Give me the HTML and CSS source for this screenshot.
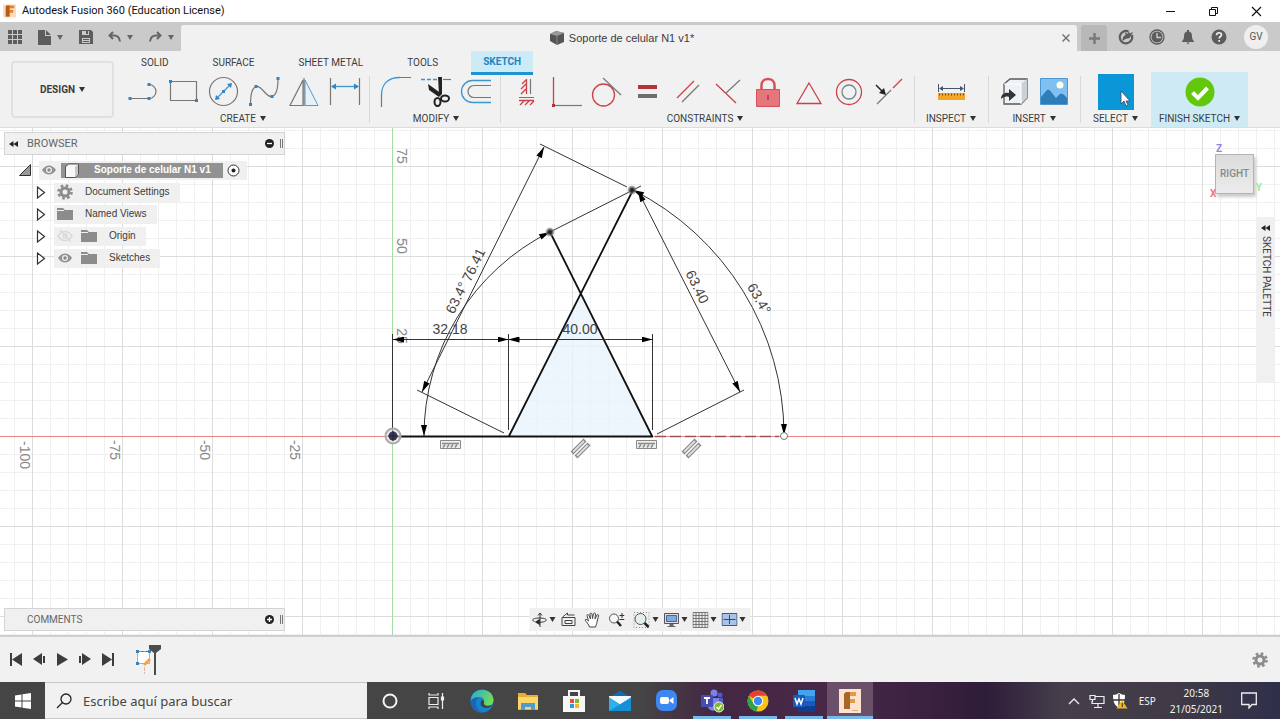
FILE: index.html
```html
<!DOCTYPE html>
<html lang="es">
<head>
<meta charset="utf-8">
<title>Autodesk Fusion 360 (Education License)</title>
<link rel="stylesheet" href="styles.css">
</head>
<body>
<header class="titlebar">
  <svg class="app-logo" viewBox="0 0 14 14" aria-hidden="true"><rect width="14" height="14" fill="#fbdcc0"/><path d="M4 1h8v3H7v2h4v3H7v4H3V2z" fill="#e8802a"/><path d="M4 1h3v12H3V2z" fill="#b85c14"/></svg>
  <span class="app-title">Autodesk Fusion 360 (Education License)</span>
  <div class="win-controls">
    <button class="win-btn" aria-label="Minimize"><svg width="11" height="11" viewBox="0 0 11 11"><path d="M1 5.500h9" stroke="#111"/></svg></button>
    <button class="win-btn" aria-label="Restore"><svg width="11" height="11" viewBox="0 0 11 11" fill="none" stroke="#111"><path d="M1.500 3.500h6v6h-6zM3.500 3V1.500h6v6H8"/></svg></button>
    <button class="win-btn" aria-label="Close"><svg width="11" height="11" viewBox="0 0 11 11"><path d="M1 1l9 9M10 1l-9 9" stroke="#111" stroke-width="1.200"/></svg></button>
  </div>
</header>

<div class="appbar">
  <div class="quick">
    <button class="qbtn" aria-label="Data panel"><svg width="14" height="14" viewBox="0 0 14 14" fill="#5c5c5c"><path d="M0 0h4v4H0zM5 0h4v4H5zM10 0h4v4h-4zM0 5h4v4H0zM5 5h4v4H5zM10 5h4v4h-4zM0 10h4v4H0zM5 10h4v4H5zM10 10h4v4h-4z"/></svg></button>
    <button class="qbtn" aria-label="File"><svg width="13" height="15" viewBox="0 0 13 15" fill="#5c5c5c"><path d="M0 0h7v6h6v9H0zM8 0l5 5H8z"/></svg><i class="caret gray"></i></button>
    <button class="qbtn" aria-label="Save"><svg width="14" height="14" viewBox="0 0 14 14"><path d="M0 0h12l2 2v12H0z" fill="#5c5c5c"/><path d="M3 1h7v4H3zM3 8h8v5H3z" fill="#cacaca"/><path d="M7 1h2v3H7zM4 9h6v1H4zM4 11h6v1H4z" fill="#5c5c5c"/></svg></button>
    <button class="qbtn" aria-label="Undo"><svg width="13" height="12" viewBox="0 0 13 12"><path d="M5 1L1.500 4.500 5 8M2 4.500h4c3.500 0 5.500 2 6 6" fill="none" stroke="#666" stroke-width="2"/></svg><i class="caret gray"></i></button>
    <button class="qbtn" aria-label="Redo"><svg width="13" height="12" viewBox="0 0 13 12"><path d="M8 1l3.500 3.500L8 8M11 4.500H7c-3.500 0-5.500 2-6 6" fill="none" stroke="#666" stroke-width="2"/></svg><i class="caret gray"></i></button>
  </div>
  <div class="doc-tab">
    <span class="doc-name"><svg width="16" height="16" viewBox="0 0 16 16"><path d="M1 4l6-3 8 2v9l-7 3-7-4z" fill="#555"/><path d="M1 4l6-3 8 2-7 3z" fill="#999"/><path d="M8 6v9" stroke="#888"/></svg>Soporte de celular N1 v1*</span>
    <button class="tab-close" aria-label="Close tab"><svg width="8" height="8" viewBox="0 0 8 8"><path d="M.5.5l7 7M7.500.5l-7 7" stroke="#777" stroke-width="1.500"/></svg></button>
  </div>
  <button class="new-tab" aria-label="New tab"><svg width="13" height="13" viewBox="0 0 13 13"><path d="M6.500 1v11M1 6.500h11" stroke="#7a7a7a" stroke-width="2.500"/></svg></button>
  <div class="status">
    <button class="sbtn" aria-label="Extensions"><svg width="16" height="16" viewBox="0 0 16 16"><path d="M10.500 2.500A6.200 6.200 0 1 0 13.800 6" fill="none" stroke="#5c5c5c" stroke-width="2.200"/><path d="M4.500 12c0-3 .5-5 3-6l-.5-3 2.500 2L11 2l.5 2.500L15 3l-2.500 4.500C12 10 9 9 7.500 10z" fill="#5c5c5c"/></svg></button>
    <button class="sbtn" aria-label="Job status"><svg width="16" height="16" viewBox="0 0 16 16"><circle cx="8" cy="8" r="7" fill="none" stroke="#5c5c5c" stroke-width="1.300"/><circle cx="8" cy="8" r="5.500" fill="#5c5c5c"/><path d="M8 4v4.500h4" fill="none" stroke="#cacaca" stroke-width="1.400"/></svg></button>
    <button class="sbtn" aria-label="Notifications"><svg width="16" height="16" viewBox="0 0 16 16" fill="#5c5c5c"><path d="M7 1h2v1.500c2 .5 3 2 3 4.500 0 2.500.5 4 2 5v1H2v-1c1.500-1 2-2.500 2-5s1-4 3-4.500zM6.500 13.500h3L8 15.500z"/></svg></button>
    <button class="sbtn" aria-label="Help"><svg width="16" height="16" viewBox="0 0 16 16"><circle cx="8" cy="8" r="7.500" fill="#5c5c5c"/><path d="M5.500 6.300c0-3.300 5-3.300 5-.5 0 1.700-2.300 1.700-2.300 3.700M8.200 11v1.800" fill="none" stroke="#eee" stroke-width="1.700"/></svg></button>
    <button class="avatar">GV</button>
  </div>
</div>

<div class="ribbon">
  <div class="workspace"><button class="design">DESIGN<i class="caret"></i></button></div>
  <nav class="tabs">
    <button class="tab">SOLID</button><button class="tab">SURFACE</button><button class="tab">SHEET METAL</button><button class="tab">TOOLS</button><button class="tab active">SKETCH</button>
  </nav>
  <div class="groups">
    <section class="group create">
      <div class="tools">
        <button class="tool" aria-label="Line"><svg viewBox="0 0 40 32"><path d="M7 22.500h19a7 7 0 0 0 0-14" class="ln"/><path d="M5.500 21h3v3h-3zM24.500 21h3v3h-3zM24.500 7h3v3h-3z" class="bp"/></svg></button>
        <button class="tool" aria-label="Rectangle"><svg viewBox="0 0 40 32"><path d="M7.500 5.500h26v19h-26z" class="ln"/><path d="M6 4h3v3H6zM32 23h3v3h-3z" class="bp"/></svg></button>
        <button class="tool" aria-label="Circle"><svg viewBox="0 0 40 32"><circle cx="20.500" cy="15.500" r="14" class="ln"/><path d="M14 22l13-13" class="bl"/><path d="M12 24l1-5 4 4zM29 7l-1 5-4-4zM19 14h3v3h-3z" class="bp"/></svg></button>
        <button class="tool" aria-label="Spline"><svg viewBox="0 0 40 32"><path d="M7.500 28C7.500 18 9 12 13 10.500 19 9 23 22 29 20.500 34 19 35 12 35 3" class="ln"/><path d="M6 27h3v3H6zM11.500 9h3v3h-3zM27.500 19h3v3h-3zM33.500 1h3v3h-3z" class="bp"/></svg></button>
        <button class="tool" aria-label="Mirror"><svg viewBox="0 0 40 32"><path d="M20 4v25.500H7z" class="ln"/><path d="M22 4v25.500h13z" fill="#e6f2fa" stroke="#4c9fd6"/><path d="M21 2v28" class="ln"/></svg></button>
        <button class="tool" aria-label="Sketch dimension"><svg viewBox="0 0 40 32"><path d="M7.500 2v27M36.500 2v27" class="ln"/><path d="M9 10.500h26" class="bl"/><path d="M8 10.500l5-3v6zM36 10.500l-5-3v6z" class="bp"/></svg></button>
      </div>
      <button class="group-label">CREATE<i class="caret"></i></button>
    </section>
    <section class="group modify">
      <div class="tools">
        <button class="tool" aria-label="Fillet"><svg viewBox="0 0 40 32"><path d="M5.500 31V18M23 1.500h12" class="ln"/><path d="M5.500 19C5.500 8 12 1.500 24 1.500" class="bl"/></svg></button>
        <button class="tool" aria-label="Trim"><svg viewBox="0 0 40 32"><path d="M5 3.500h16" class="bl" stroke-dasharray="4 2"/><path d="M27 3.500h8" class="ln"/><path d="M22 1h4v17h-3z" fill="#222"/><path d="M12 8l14 10-3 3-10-7z" fill="#222"/><ellipse cx="21.500" cy="26" rx="3" ry="4" fill="none" stroke="#222" stroke-width="2"/><ellipse cx="29" cy="22.500" rx="4" ry="3" fill="none" stroke="#222" stroke-width="2"/></svg></button>
        <button class="tool" aria-label="Offset"><svg viewBox="0 0 40 32"><path d="M35 4.500H16.500a11 11 0 0 0 0 22H35" class="bl"/><path d="M35 9.500H18a6 6 0 0 0 0 12h17" class="ln"/></svg></button>
      </div>
      <button class="group-label">MODIFY<i class="caret"></i></button>
    </section>
    <section class="group constraints">
      <div class="tools">
        <button class="tool" aria-label="Horizontal/Vertical"><svg viewBox="0 0 40 32"><path d="M21.500 3v15M17 8l4-4M16 13l5-5M16 18l5-5M14 24.500h15M15 29l4-4M20 29l4-4M25 29l4-4" class="rl"/><path d="M25.500 3v15M14 21.500h15" class="ln"/></svg></button>
        <button class="tool" aria-label="Coincident"><svg viewBox="0 0 40 32"><path d="M8.500 1v27" class="rl"/><path d="M9 29.500h28" class="ln"/><path d="M7 28h3v3H7z" fill="#b5323a"/></svg></button>
        <button class="tool" aria-label="Tangent"><svg viewBox="0 0 40 32"><circle cx="18.500" cy="19" r="11" class="rl"/><path d="M18 2l18 17" class="ln"/></svg></button>
        <button class="tool" aria-label="Equal"><svg viewBox="0 0 40 32"><path d="M13 9h19v4H13z" fill="#b5323a"/><path d="M13 18h19v4H13z" fill="#6d6d6d"/></svg></button>
        <button class="tool" aria-label="Parallel"><svg viewBox="0 0 40 32"><path d="M12 22L29 5" class="rl"/><path d="M17 26L34 9" class="ln"/></svg></button>
        <button class="tool" aria-label="Perpendicular"><svg viewBox="0 0 40 32"><path d="M11 8l20 19" class="rl"/><path d="M21 17L35 4" class="ln"/></svg></button>
        <button class="tool" aria-label="Fix"><svg viewBox="0 0 40 32"><path d="M16.500 14V9c0-8 13-8 13 0v5" fill="none" stroke="#d5525a" stroke-width="2.500"/><path d="M11.500 13.500h23v17h-23z" fill="#e5777c" stroke="#d5525a"/><path d="M23 19v5" stroke="#b5323a" stroke-width="1.500"/></svg></button>
        <button class="tool" aria-label="Midpoint"><svg viewBox="0 0 40 32"><path d="M24 7l12 20.500H12z" class="rl"/></svg></button>
        <button class="tool" aria-label="Concentric"><svg viewBox="0 0 40 32"><circle cx="24" cy="16" r="12.500" class="rl"/><circle cx="24" cy="16" r="7" fill="none" stroke="#73878a" stroke-width="1.300"/></svg></button>
        <button class="tool" aria-label="Collinear"><svg viewBox="0 0 40 32"><path d="M12 28l14-14" class="ln"/><path d="M28 12l9-9" class="rl"/><path d="M11 9l6 6" stroke="#222" stroke-width="1.500"/><path d="M21 19l-2-7-5 5z" fill="#222"/></svg></button>
      </div>
      <button class="group-label">CONSTRAINTS<i class="caret"></i></button>
    </section>
    <section class="group inspect">
      <div class="tools">
        <button class="tool" aria-label="Measure"><svg viewBox="0 0 40 32"><path d="M7.500 8v8M33.500 8v8M9 12.500h23" stroke="#44546a" fill="none"/><path d="M8 12.500l4-2.500v5zM33 12.500L29 10v5z" fill="#44546a"/><path d="M7 17h27v7H7z" fill="#f5a623"/><path d="M8 18.500h25" stroke="#75531b" stroke-width="2" stroke-dasharray="1 2"/></svg></button>
      </div>
      <button class="group-label">INSPECT<i class="caret"></i></button>
    </section>
    <section class="group insert">
      <div class="tools">
        <button class="tool" aria-label="Insert derive"><svg viewBox="0 0 40 32"><path d="M10 8l6-5h17v19l-6 6H10z" fill="#eff2f4" stroke="#555a60" stroke-width="1.300"/><path d="M27 8l6-5v19l-6 6z" fill="#ccd1d6"/><path d="M10 8h17v20" fill="none" stroke="#fff"/><path d="M7 23c0-5 4-7 8-6v-4l7 6-7 6v-4c-3-1-6 0-8 2z" fill="#303438"/></svg></button>
        <button class="tool" aria-label="Canvas"><svg viewBox="0 0 40 32"><path d="M6.500 2.500h27v26h-27z" fill="#7fc0f2" stroke="#4b97d0"/><path d="M7 21l6-7c2-1 3 0 5 3l4 5 4-4c2-1 4 0 7 4v6H7z" fill="#2e7cb8"/><circle cx="26" cy="9" r="3.500" fill="#fffde8"/></svg></button>
      </div>
      <button class="group-label">INSERT<i class="caret"></i></button>
    </section>
    <section class="group select">
      <div class="tools">
        <button class="tool" aria-label="Select"><svg class="big" width="36" height="36" viewBox="0 0 36 36"><path d="M0 0h36v36H0z" fill="#0b96d8"/><path d="M23 17v13l3-3 2 5 2-1-2-4h4z" fill="#fff" stroke="#445" stroke-width=".8"/></svg></button>
      </div>
      <button class="group-label">SELECT<i class="caret"></i></button>
    </section>
    <section class="group finish">
      <div class="tools">
        <button class="tool" aria-label="Finish sketch"><svg viewBox="0 0 40 32"><circle cx="20" cy="16" r="14.500" fill="#63c70c"/><path d="M12.500 16.500l5.500 5.500 9.500-10" fill="none" stroke="#fff" stroke-width="4"/></svg></button>
      </div>
      <button class="group-label">FINISH SKETCH<i class="caret"></i></button>
    </section>
  </div>
</div>

<main class="canvas">
  <svg class="sketch" width="100%" height="100%" aria-label="Sketch">
    <defs>
      <pattern id="minor" width="18" height="18" patternUnits="userSpaceOnUse" x="-1" y="0"><path d="M.5 0v18M0 .5h18" stroke="#f0f0f0"/></pattern>
      <pattern id="major" width="90" height="90" patternUnits="userSpaceOnUse" x="-1" y="0"><path d="M.5 0v90M0 .5h90" stroke="#dcdcdc"/></pattern>
      <marker id="arrow" viewBox="0 0 11 6" markerWidth="11" markerHeight="6" refX="11" refY="3" orient="auto-start-reverse" markerUnits="userSpaceOnUse"><path d="M0 0l11 3-11 3z"/></marker>
      <radialGradient id="pt"><stop offset=".3" stop-color="#222"/><stop offset="1" stop-color="#999" stop-opacity=".5"/></radialGradient>
      <g id="glyph-h"><path d="M-9.500-4.500h20v8h-20z" fill="#eee" stroke="#8a8a8a"/><path d="M-8-1.500h17" stroke="#8a8a8a" stroke-width="1.500"/><path d="M-7 2.500l2-3M-3 2.500l2-3M1 2.500l2-3M5 2.500l2-3" stroke="#8a8a8a" stroke-width="1.500"/></g>
      <g id="glyph-p"><path d="M-8 5L5-8M-4 9L9-4" stroke="#858585" stroke-width="4"/><path d="M-7 4L4-7M-3 8L8-3" stroke="#dedede" stroke-width="2"/></g>
    </defs>
    <g transform="translate(393 308)">
      <path d="M-393-308H2600V1400H-393z" fill="url(#minor)"/>
      <path d="M-393-308H2600V1400H-393z" fill="url(#major)"/>
      <path d="M-.5-308V1400" stroke="#a5dba5"/>
      <path d="M-393 .5H2600" stroke="#ee8484"/>
      <g class="ruler">
        <text transform="translate(4 -280) rotate(90)" text-anchor="middle">75</text>
        <text transform="translate(4 -190) rotate(90)" text-anchor="middle">50</text>
        <text transform="translate(4 -100) rotate(90)" text-anchor="middle">25</text>
        <text transform="translate(-103 14) rotate(90)" text-anchor="middle">-25</text>
        <text transform="translate(-193 14) rotate(90)" text-anchor="middle">-50</text>
        <text transform="translate(-283 14) rotate(90)" text-anchor="middle">-75</text>
        <text transform="translate(-373 19) rotate(90)" text-anchor="middle">-100</text>
      </g>
      <path d="M188-144L116 0h143z" fill="#e9f4fc" fill-opacity=".8"/>
      <g fill="none" stroke="#111" stroke-width="1.800">
        <path d="M0 .5h260M116 0l124-246M259 0L157-204"/>
      </g>
      <g fill="none" stroke="#333" stroke-width="1">
        <path d="M-.5-102V0M115.500-102V-6M259.500-102V-6M157-204l91-46M147-292l87 43M24-46l87 43M264-2l87-44"/>
        <path d="M0-96.500h115.500" marker-start="url(#arrow)" marker-end="url(#arrow)"/>
        <path d="M115.500-96.500h144" marker-start="url(#arrow)" marker-end="url(#arrow)"/>
        <path d="M151-289L29-44" marker-start="url(#arrow)" marker-end="url(#arrow)"/>
        <path d="M245-245L347-44" marker-start="url(#arrow)" marker-end="url(#arrow)"/>
        <path d="M31 0A228 228 0 0 1 157-204" marker-start="url(#arrow)" marker-end="url(#arrow)"/>
        <path d="M240-246A275 275 0 0 1 391-1" marker-start="url(#arrow)" marker-end="url(#arrow)"/>
      </g>
      <path d="M262 .5h124" stroke="#93565d" stroke-width="1.500" stroke-dasharray="11 4"/>
      <circle cx="391" cy="0" r="3.500" fill="#fff" stroke="#777"/>
      <circle cx="157" cy="-204" r="4.500" fill="url(#pt)"/>
      <circle cx="239" cy="-246" r="4.500" fill="url(#pt)"/>
      <circle r="7.500" fill="#ddd" fill-opacity=".6" stroke="#aaa" stroke-width="2"/><circle r="4.500" fill="#3b3260"/><path d="M-5 0H5M0-5V5" stroke="#222"/>
      <g class="dims">
        <text x="57" y="-102" text-anchor="middle">32.18</text>
        <text x="187" y="-102" text-anchor="middle">40.00</text>
        <text transform="translate(85 -169) rotate(-63.500)" text-anchor="middle">76.41</text>
        <text transform="translate(68 -136) rotate(-63.500)" text-anchor="middle">63.4°</text>
        <text transform="translate(300 -147) rotate(63.500)" text-anchor="middle">63.40</text>
        <text transform="translate(362 -135) rotate(60)" text-anchor="middle">63.4°</text>
      </g>
      <use href="#glyph-h" x="57" y="9"/><use href="#glyph-h" x="253" y="9"/>
      <use href="#glyph-p" x="187" y="12"/><use href="#glyph-p" x="298" y="12"/>
    </g>
  </svg>

  <aside class="browser">
    <div class="panel-head"><svg width="9" height="6" viewBox="0 0 9 6"><path d="M4.500 0v6L0 3zM9 0v6L4.500 3z" fill="#222"/></svg><span>BROWSER</span><button class="round" aria-label="Minimize browser"><svg width="9" height="9" viewBox="0 0 9 9"><circle cx="4.500" cy="4.500" r="4.500" fill="#222"/><path d="M2 4.500h5" stroke="#fff" stroke-width="1.300"/></svg></button><i class="grip"></i></div>
    <ul class="tree">
      <li class="row root"><svg width="12" height="12" viewBox="0 0 12 12"><path d="M11.500.5v11H.5z" fill="#999" stroke="#333"/></svg>
        <span class="chip"><svg width="14" height="10" viewBox="0 0 14 10"><path d="M0 5c4-6 10-6 14 0-4 6-10 6-14 0z" fill="#929292"/><circle cx="7" cy="5" r="3" fill="#eee"/><circle cx="7" cy="5" r="1.700" fill="#888"/></svg>
        <span class="root-name"><svg width="16" height="15" viewBox="0 0 16 15"><path d="M1.500 4l3-3h10v10l-3 3.500h-10z" fill="#f7f7f7" stroke="#555"/><path d="M11 4l3-3v10l-3 3z" fill="#c8c8c8"/></svg>Soporte de celular N1 v1</span>
        <svg width="13" height="13" viewBox="0 0 13 13"><circle cx="6.500" cy="6.500" r="5.500" fill="#fff" stroke="#333"/><circle cx="6.500" cy="6.500" r="2" fill="#222"/></svg></span></li>
      <li class="row"><svg class="tri" width="10" height="13" viewBox="0 0 10 13"><path d="M1.500 1v11l7-5.500z" fill="#fff" stroke="#333" stroke-width="1.200"/></svg><span class="chip"><svg width="16" height="16" viewBox="0 0 16 16"><circle cx="8" cy="8" r="4" fill="none" stroke="#8c8c8c" stroke-width="3"/><circle cx="8" cy="8" r="6.500" fill="none" stroke="#8c8c8c" stroke-width="2.500" stroke-dasharray="2.600 2.500"/></svg><span class="node">Document Settings</span></span></li>
      <li class="row"><svg class="tri" width="10" height="13" viewBox="0 0 10 13"><path d="M1.500 1v11l7-5.500z" fill="#fff" stroke="#333" stroke-width="1.200"/></svg><span class="chip"><svg width="16" height="12" viewBox="0 0 16 12"><path d="M0 0h6l2 2h8v10H0z" fill="#8c8c8c"/><path d="M0 2.500h7" stroke="#eee"/></svg><span class="node">Named Views</span></span></li>
      <li class="row"><svg class="tri" width="10" height="13" viewBox="0 0 10 13"><path d="M1.500 1v11l7-5.500z" fill="#fff" stroke="#333" stroke-width="1.200"/></svg><span class="chip"><svg width="16" height="12" viewBox="0 0 16 12" fill="none" stroke="#dadada" stroke-width="1.500"><path d="M1 6c4-6 10-6 14 0-4 6-10 6-14 0zM3 0l11 12"/><circle cx="8" cy="6" r="2"/></svg><svg width="16" height="12" viewBox="0 0 16 12"><path d="M0 0h6l2 2h8v10H0z" fill="#8c8c8c"/><path d="M0 2.500h7" stroke="#eee"/></svg><span class="node">Origin</span></span></li>
      <li class="row"><svg class="tri" width="10" height="13" viewBox="0 0 10 13"><path d="M1.500 1v11l7-5.500z" fill="#fff" stroke="#333" stroke-width="1.200"/></svg><span class="chip"><svg width="16" height="12" viewBox="-1 -1 16 12"><path d="M0 5c4-6 10-6 14 0-4 6-10 6-14 0z" fill="#929292"/><circle cx="7" cy="5" r="3" fill="#eee"/><circle cx="7" cy="5" r="1.700" fill="#888"/></svg><svg width="16" height="12" viewBox="0 0 16 12"><path d="M0 0h6l2 2h8v10H0z" fill="#8c8c8c"/><path d="M0 2.500h7" stroke="#eee"/></svg><span class="node">Sketches</span></span></li>
    </ul>
  </aside>

  <div class="viewcube">
    <span class="axis z">Z</span><button class="face">RIGHT</button><span class="axis x">X</span><span class="axis y">Y</span>
  </div>
  <button class="palette"><svg width="9" height="6" viewBox="0 0 9 6"><path d="M4.500 0v6L0 3zM9 0v6L4.500 3z" fill="#222"/></svg><span>SKETCH PALETTE</span></button>

  <div class="comments panel-head"><span>COMMENTS</span><button class="round" aria-label="Open comments"><svg width="9" height="9" viewBox="0 0 9 9"><circle cx="4.500" cy="4.500" r="4.500" fill="#222"/><path d="M2 4.500h5M4.500 2v5" stroke="#fff" stroke-width="1.300"/></svg></button><i class="grip"></i></div>

  <div class="navbar">
    <button class="nbtn" aria-label="Orbit"><svg width="16" height="16" viewBox="0 0 16 16" fill="none" stroke="#333"><path d="M8.500 15V1M6.500 3.500l2-2.500 2 2.500M3 9.500C-1 8 2 6 8 6s9 2 5 3.500c-1 .5-3 .8-6 .8"/><path d="M4 10l4-2.500v5z" fill="#222"/></svg><i class="caret"></i></button>
    <button class="nbtn" aria-label="Look at"><svg width="16" height="16" viewBox="0 0 16 16" fill="none" stroke="#444"><path d="M1.500 5.500h13v8h-13zM4.500 8.500h7v3h-7zM2 5l5-4v2h7"/></svg></button>
    <button class="nbtn" aria-label="Pan"><svg width="16" height="16" viewBox="0 0 16 16"><path d="M5 15c-1-3-3-5-4.500-7 1-1.500 2.500 0 3.500 1L2.500 3.500c0-1.500 1.500-1 2 0L6 7 5.500 2c.5-1.500 1.500-1 2 0L8 6.500 9 1.500c.5-1 2-.5 2 .5l-.5 5 2-4c1-1 2 0 1.500 1L12.500 10c-.5 3-1 3-1.500 5z" fill="#fff" stroke="#444"/></svg></button>
    <button class="nbtn" aria-label="Zoom"><svg width="16" height="16" viewBox="0 0 16 16"><circle cx="5.500" cy="6.500" r="4.500" fill="#f7f7f7" stroke="#555"/><path d="M8.500 9.500l4 4.500" stroke="#222" stroke-width="2.500"/><path d="M11 3.500h5M13.500 1v5M11 7.500h5" stroke="#333"/></svg></button>
    <button class="nbtn" aria-label="Fit"><svg width="18" height="16" viewBox="0 0 18 16"><path d="M1.500.5h15v15h-15z" fill="none" stroke="#888" stroke-dasharray="1 2"/><circle cx="8" cy="7" r="5.500" fill="#e5eeee" stroke="#555"/><path d="M12 11l4 4" stroke="#222" stroke-width="2.500"/></svg><i class="caret"></i></button>
    <button class="nbtn" aria-label="Display settings"><svg width="16" height="16" viewBox="0 0 16 16"><path d="M1 1.500h14v10H1z" fill="#ddd" stroke="#555"/><path d="M3 3.500h10v6H3z" fill="#85a9de" stroke="#4568a0"/><path d="M6 12h4v2h2v1H4v-1h2z" fill="#667"/></svg><i class="caret"></i></button>
    <button class="nbtn" aria-label="Grid and snaps"><svg width="16" height="16" viewBox="0 0 16 16"><path d="M.5.500h15v15H.5zM3.500 0v16M6.500 0v16M9.500 0v16M12.500 0v16M0 3.500h16M0 6.500h16M0 9.500h16M0 12.500h16" fill="none" stroke="#777"/></svg><i class="caret"></i></button>
    <button class="nbtn" aria-label="Viewports"><svg width="16" height="14" viewBox="0 0 16 14"><path d="M.5.500h15v12H.5z" fill="#a9c3e8" stroke="#445878"/><path d="M2 6.500h12M8 2v9" stroke="#334a70"/></svg><i class="caret"></i></button>
  </div>
</main>

<footer class="timeline">
  <div class="transport">
    <button class="play" aria-label="First"><svg width="12" height="13" viewBox="0 0 12 13" fill="#3d3d3d"><path d="M0 0h2v13H0zM12 0v13L2 6.500z"/></svg></button>
    <button class="play" aria-label="Previous"><svg width="12" height="13" viewBox="0 0 12 13" fill="#3d3d3d"><path d="M9 0v12L0 6zM10 3h2v7h-2z"/></svg></button>
    <button class="play" aria-label="Play"><svg width="12" height="13" viewBox="0 0 12 13" fill="#3d3d3d"><path d="M1 0l11 6.500L1 13z"/></svg></button>
    <button class="play" aria-label="Next"><svg width="12" height="13" viewBox="0 0 12 13" fill="#3d3d3d"><path d="M3 0v12l9-6zM0 3h2v7H0z"/></svg></button>
    <button class="play" aria-label="Last"><svg width="12" height="13" viewBox="0 0 12 13" fill="#3d3d3d"><path d="M0 0v13l10-6.500zM10 0h2v13h-2z"/></svg></button>
  </div>
  <button class="feature" aria-label="Sketch1"><svg width="26" height="32" viewBox="0 0 26 32"><path d="M2.500 7.500h12v12h-12z" fill="#fff" stroke="#8bb9dd"/><path d="M2.500 7.500h12" stroke="#555" stroke-dasharray="2 2"/><path d="M1 6h3v3H1zM13 6h3v3h-3zM1 18h3v3H1z" fill="#3c81b8"/><path d="M8 20l6-6 2 2-6 6z" fill="#f4a14b"/><path d="M9.500 23v7" stroke="#e5b5a5" stroke-dasharray="4 1"/><path d="M14 1h12v4l-5 4h-2l-5-4z" fill="#4c4c4c"/><path d="M20 8v23" stroke="#4c4c4c" stroke-width="2"/></svg></button>
  <button class="gear" aria-label="Timeline settings"><svg width="16" height="16" viewBox="0 0 16 16"><circle cx="8" cy="8" r="4" fill="none" stroke="#8c8c8c" stroke-width="3"/><circle cx="8" cy="8" r="6.500" fill="none" stroke="#8c8c8c" stroke-width="2.500" stroke-dasharray="2.600 2.500"/></svg></button>
</footer>

<div class="taskbar">
  <button class="start" aria-label="Inicio"><svg width="16" height="16" viewBox="0 0 16 16" fill="#fff"><path d="M0 2.500l6.500-1v6H0zM7.500 1.300L16 0v7.500H7.500zM0 8.500h6.500v6L0 13.500zM7.500 8.500H16V16l-8.500-1.300z"/></svg></button>
  <label class="search"><svg width="16" height="16" viewBox="0 0 16 16" fill="none" stroke="#222" stroke-width="1.300"><circle cx="10" cy="6" r="5"/><path d="M6.500 9.500L1 15"/></svg><input type="text" placeholder="Escribe aquí para buscar" aria-label="Escribe aquí para buscar"></label>
  <div class="apps">
    <button class="app" aria-label="Cortana"><svg width="24" height="24" viewBox="0 0 24 24"><circle cx="12" cy="12" r="6.500" fill="none" stroke="#f3f3f3" stroke-width="2"/></svg></button>
    <button class="app" aria-label="Vista de tareas"><svg width="24" height="24" viewBox="0 0 24 24" fill="none" stroke="#eee" stroke-width="1.200"><path d="M5 8.500h9v7H5zM5 4v2h9V4M5 20v-2h9v2M18.500 4v16"/><path d="M17.500 8h2v3h-2z" fill="#eee"/></svg></button>
    <button class="app" aria-label="Edge"><svg width="24" height="24" viewBox="0 0 24 24"><defs><linearGradient id="eg" x1="0" y1="0" x2="1" y2=".4"><stop stop-color="#2aa7df"/><stop offset="1" stop-color="#6fda5c"/></linearGradient></defs><circle cx="12" cy="12" r="11.500" fill="#1583cf"/><path d="M1 10C3-3 23-2 23.500 11c0 4-3 6-6 6-4 0-4-2-3.500-3C15 11 13 8 9 8c-4 0-7 1-8 5z" fill="url(#eg)"/><path d="M9 8.500c-5 2-4 12 3 14.500C5 24 .5 18 .6 12 2 9 6 8 9 8.500z" fill="#1b65b6"/><path d="M14 13c-1 3 2 5 8 3-2 3-6 4-9 2-3-1-3-5-1-7 1 0 2 1 2 2z" fill="#3d4143"/></svg></button>
    <button class="app" aria-label="Explorador"><svg width="24" height="24" viewBox="0 0 24 24"><path d="M2 4h7l2 2h11v15H2z" fill="#e7ad34"/><path d="M2 8h20v12H2z" fill="#fbd76b"/><path d="M5 21v-7h14v7h-4v-3H9v3z" fill="#4d9bd0"/></svg></button>
    <button class="app" aria-label="Store"><svg width="24" height="24" viewBox="0 0 24 24"><path d="M7 7V2h10v5" fill="none" stroke="#f4f4f4" stroke-width="2"/><path d="M1 7h22v16H1z" fill="#f6f6f6"/><path d="M8 10h4v4H8z" fill="#e9522f"/><path d="M13 10h4v4h-4z" fill="#83b735"/><path d="M8 15h4v4H8z" fill="#2b9ede"/><path d="M13 15h4v4h-4z" fill="#f5b81d"/></svg></button>
    <button class="app" aria-label="Correo"><svg width="24" height="24" viewBox="0 0 24 24"><path d="M1 8l11-6 11 6v14H1z" fill="#0b6cb8"/><path d="M1 7h22v9H1z" fill="#f5f9fc"/><path d="M1 8l11 7 11-7v14H1z" fill="#2fb2ea"/><path d="M1 22l22-13v13z" fill="#168fd5"/><path d="M1 8l11 7 11-7H1z" fill="#f5f9fc"/></svg></button>
    <button class="app" aria-label="Zoom"><svg width="24" height="24" viewBox="0 0 24 24"><rect x="2" y="1" width="21" height="21" rx="7" fill="#3c87f2"/><rect x="6" y="8" width="9" height="7" rx="2" fill="#fff"/><path d="M15.500 11l4-3v7l-4-3z" fill="#fff"/></svg></button>
    <button class="app open" aria-label="Teams"><svg width="24" height="24" viewBox="0 0 24 24"><circle cx="14" cy="4" r="3.500" fill="#7b83eb"/><circle cx="20" cy="6" r="2.500" fill="#5059c9"/><path d="M16 9h7v7c0 3-3 4-7 3z" fill="#5059c9"/><path d="M8 9h11v9c-1 5-10 5-11 0z" fill="#7b83eb"/><rect x="1" y="6" width="12" height="12" rx="1" fill="#454db5"/><path d="M4 9h6M7 9v6" stroke="#fff" stroke-width="1.800"/><circle cx="19" cy="18" r="5" fill="#7dba28" stroke="#eee"/><path d="M16.500 18l2 2 3-4" fill="none" stroke="#fff" stroke-width="1.500"/></svg></button>
    <button class="app open" aria-label="Chrome"><svg width="24" height="24" viewBox="0 0 24 24"><circle cx="12" cy="12" r="10.500" fill="#f9c515"/><path d="M12 12L2.900 6.800A10.500 10.500 0 0 1 21 6.700H12z" fill="#e34133"/><path d="M2.900 6.800L7.500 14.500 12 17l-1.500 5.400A10.500 10.500 0 0 1 2.900 6.800z" fill="#2fa24c"/><circle cx="12" cy="12" r="5.200" fill="#fff"/><circle cx="12" cy="12" r="4.200" fill="#4285f4"/></svg></button>
    <button class="app open" aria-label="Word"><svg width="24" height="24" viewBox="0 0 24 24"><path d="M6 1h17v6H6z" fill="#41a5ee"/><path d="M6 7h17v5H6z" fill="#2b7cd3"/><path d="M6 12h17v5H6z" fill="#185abd"/><path d="M6 17h17v6H6z" fill="#103f91"/><rect x="1" y="6" width="12" height="12" rx="1" fill="#185abd"/><path d="M3 9l2 6 2-5 2 5 2-6" fill="none" stroke="#fff" stroke-width="1.500"/></svg></button>
    <button class="app open current" aria-label="Fusion 360"><svg width="24" height="24" viewBox="0 0 24 24"><path d="M1 0h22v24H1z" fill="#fbe3cd"/><path d="M8 3h10v4h-6v3h5v4h-5v6H6V5z" fill="#e29a45"/><path d="M8 3h4v17H6V5z" fill="#a8652a"/><path d="M14 21.500h6" stroke="#d9b18a"/></svg></button>
  </div>
  <div class="tray">
    <button class="tbtn" aria-label="Iconos ocultos"><svg width="12" height="8" viewBox="0 0 12 8"><path d="M1 7l5-5 5 5" fill="none" stroke="#eee" stroke-width="1.300"/></svg></button>
    <button class="tbtn" aria-label="Red"><svg width="16" height="16" viewBox="0 0 16 16" fill="none" stroke="#eee" stroke-width="1.200"><path d="M6 3.500h9v7H3V8M1 2.500h5v4H1zM9 11v3M5 14.500h8M3.500 7v2"/></svg></button>
    <button class="tbtn" aria-label="Seguridad"><svg width="16" height="16" viewBox="0 0 16 16"><path d="M7 0c2 1 4 2 6 2 0 6-1 10-6 13C2 12 1 8 1 2c2 0 4-1 6-2z" fill="#fff"/><path d="M7 1v13M1 7h12" stroke="#333" stroke-width="1.300"/><path d="M10 7l5.500 8.500h-11z" fill="#f4b51c"/><path d="M10.300 10v4" stroke="#333"/></svg></button>
    <button class="lang">ESP</button>
    <button class="clock"><span>20:58</span><span>21/05/2021</span></button>
    <button class="tbtn notes" aria-label="Notificaciones"><svg width="16" height="17" viewBox="0 0 16 17"><path d="M.7 1h14.600v11.500H11L8 16v-3.500H.7z" fill="none" stroke="#eee" stroke-width="1.300"/></svg></button>
  </div>
</div>
</body>
</html>
```
FILE: styles.css
```css
:root {
  --ui: Roboto, sans-serif;
  --doc: "Liberation Sans", sans-serif;
  --win: "Noto Sans", "Open Sans", sans-serif;
  --bar: #f1f1f1;
  --ink: #3c3c3c;
}
* { box-sizing: border-box; }
html, body { height: 100%; }
body {
  margin: 0;
  display: flex;
  flex-direction: column;
  overflow: hidden;
  font: 10px/14px var(--ui);
  color: var(--ink);
  background: #fff;
}
button { border: 0; padding: 0; margin: 0; background: none; font: inherit; color: inherit; }
svg { display: block; flex: none; }
.caret { flex: none; border: 3px solid transparent; border-top: 5px solid #333; border-bottom: 0; margin-left: 4px; }
.caret.gray { border-top-color: #666; margin-left: 6px; }

.titlebar { display: flex; align-items: center; height: 22px; padding: 0 2px 0 3px; background: #fff; font-size: 11px; color: #111; }
.app-logo { width: 13px; height: 14px; margin-right: 6px; }
.win-controls { display: flex; margin-left: auto; }
.win-btn { display: grid; place-items: center; width: 43px; height: 20px; }

.appbar { display: flex; align-items: stretch; height: 29px; padding-top: 3px; background: #cacaca; }
.quick { display: flex; align-items: center; justify-content: space-between; width: 181px; padding: 0 7px 2px 8px; }
.qbtn { display: flex; align-items: center; }
.doc-tab { flex: 1; display: flex; align-items: center; background: var(--bar); border-radius: 3px 3px 0 0; padding-right: 7px; }
.doc-name { flex: 1; display: flex; align-items: center; justify-content: center; gap: 4px; font: 11px/16px var(--doc); }
.new-tab { display: grid; place-items: center; width: 26px; margin-left: 4px; background: #b8b8b8; border-radius: 3px 3px 0 0; }
.status { display: flex; align-items: center; gap: 15px; padding: 0 12px 2px 11px; }
.avatar { width: 24px; height: 24px; margin-left: 2px; border-radius: 50%; background: #efefef; color: #555; }

.ribbon { display: grid; grid-template-columns: 123px 1fr; grid-template-rows: 21px 55px; background: var(--bar); border-bottom: 1px solid #dcdcdc; }
.workspace { grid-row: 1 / 3; padding: 10px 9px 9px 11px; }
.design { display: flex; align-items: center; justify-content: center; width: 100%; height: 57px; border: 2px solid #e0e0e0; border-radius: 4px; font-weight: bold; }
.tabs { display: flex; gap: 22px; padding-left: 7px; }
.tab { height: 24px; padding: 0 11px; }
.tab.active { padding: 0 12px; background: #cdeaf7; color: #1a86c0; font-weight: bold; border-bottom: 3px solid #1c94d2; z-index: 1; }
.groups { display: flex; align-items: stretch; }
.group { position: relative; display: flex; flex-direction: column; align-items: center; }
.group + .group:not(.finish)::before { content: ""; position: absolute; left: 0; top: 4px; bottom: 4px; width: 1px; background: #d8d8d8; }
.create { padding-right: 6px; }
.modify { padding: 0 4px 0 7px; }
.constraints { padding: 0 9px 0 5px; }
.inspect { min-width: 74px; }
.insert { min-width: 92px; }
.select { min-width: 71px; }
.finish { min-width: 97px; background: #cdeaf5; }
.tools { display: flex; height: 39px; align-items: center; }
.tool { display: grid; place-items: center; width: 40px; height: 36px; }
.tool svg { width: 40px; height: 32px; }
.tool svg.big { width: 36px; height: 36px; }
.group-label { display: flex; align-items: center; height: 15px; white-space: nowrap; }
.ln { fill: none; stroke: #777; stroke-width: 1.2; }
.bl { fill: none; stroke: #3f95d0; stroke-width: 1.3; }
.bp { fill: #2f86c6; }
.rl { fill: none; stroke: #cc4149; stroke-width: 1.3; }

.canvas { position: relative; flex: 1; min-height: 0; overflow: hidden; background: #fff; }
.sketch { position: absolute; inset: 0; }
.ruler { font: 14px var(--doc); fill: #888; }
.dims { font: 14px var(--doc); fill: #444; }

.browser { position: absolute; left: 4px; top: 4px; width: 281px; }
.panel-head { display: flex; align-items: center; height: 23px; padding: 0 1px 0 4px; background: #f0f0f0; border: 1px solid #d4d4d4; color: #666; }
.panel-head span { margin-left: 9px; }
.browser .panel-head { font-size: 11px; }
.round { margin-left: auto; }
.grip { width: 3px; height: 9px; margin-left: 6px; border: solid #777; border-width: 0 1px; }
.comments { position: absolute; left: 4px; bottom: 4px; width: 281px; padding-left: 13px; }
.tree { list-style: none; margin: 4px 0 0; padding: 0; font: 10px/14px var(--doc); }
.row { display: flex; align-items: center; height: 22px; padding-left: 32px; }
.row.root { padding-left: 15px; }
.chip { display: flex; align-items: center; gap: 8px; height: 19px; margin-left: 8px; padding: 0 10px 0 3px; background: #f0f0f0; }
.root .chip { gap: 4px; padding: 0 7px 0 3px; }
.root-name { display: flex; align-items: center; height: 15px; gap: 14px; padding: 0 12px 0 3px; margin-left: 1px; background: #929292; color: #fff; font-weight: bold; }
.node { margin-left: 4px; }

.viewcube { position: absolute; right: 26px; top: 26px; width: 39px; height: 40px; }
.face { width: 39px; height: 40px; border: 1px solid #b4b4b4; background: linear-gradient(#dcdcdc, #ececec); color: #888; box-shadow: 2px 3px 3px #ccc; font-weight: 500; }
.axis { position: absolute; font-weight: bold; line-height: 10px; }
.axis.z { left: 1px; top: -10px; color: #8b8be8; }
.axis.x { left: -5px; bottom: -5px; color: #ef7878; }
.axis.y { right: -8px; bottom: 1px; color: #9be89b; }
.palette { position: absolute; right: 5px; top: 89px; height: 165px; width: 19px; background: #f0f0f0; display: flex; flex-direction: column; align-items: center; padding-top: 8px; gap: 5px; }
.palette span { writing-mode: vertical-rl; }

.navbar { position: absolute; left: 50%; bottom: 4px; transform: translateX(-50%); display: flex; align-items: center; gap: 8px; height: 23px; padding: 0 8px 0 2px; background: #f0f0f0; }
.nbtn { display: flex; align-items: center; }
.navbar .caret { margin-left: 2px; margin-right: -3px; }

.timeline { display: flex; align-items: center; height: 47px; padding: 0 12px 0 4px; background: var(--bar); border-top: 2px solid #cfcfcf; }
.transport { display: flex; }
.play { display: grid; place-items: center; width: 23px; height: 24px; }
.feature { margin-left: 16px; }
.gear { margin-left: auto; }

.taskbar {
  display: flex;
  align-items: stretch;
  height: 37px;
  color: #f2f2f2;
  font: 10px/16px var(--win);
  background: linear-gradient(90deg, #454545 0 50%, #432743 56%, #492849 66%, #2e1c38 77%, #453f4b 83%, #403a46 92%, #2e2f4a 100%);
}
.start { display: grid; place-items: center; width: 45px; }
.search { display: flex; align-items: center; gap: 11px; width: 322px; padding-left: 11px; background: var(--bar); border: solid #c8c8c8; border-width: 1px 0; }
.search input { flex: 1; min-width: 0; border: 0; outline: 0; background: none; color: #333; font: 13px/20px var(--win); padding: 0; }
.search input::placeholder { color: #444; opacity: 1; }
.apps { display: flex; }
.app { display: grid; place-items: center; width: 46px; }
.app.open { width: 38px; margin: 0 4px; box-shadow: inset 0 -3px #76b9ed; }
.app.current { width: 46px; margin: 0; background: #6a5068; }
.tray { display: flex; align-items: center; margin-left: auto; padding-right: 20px; }
.tbtn { display: grid; place-items: center; width: 23px; height: 24px; }
.lang { margin-left: 7px; }
.clock { display: flex; flex-direction: column; align-items: center; margin-left: 14px; }
.notes { margin-left: 14px; }
```
